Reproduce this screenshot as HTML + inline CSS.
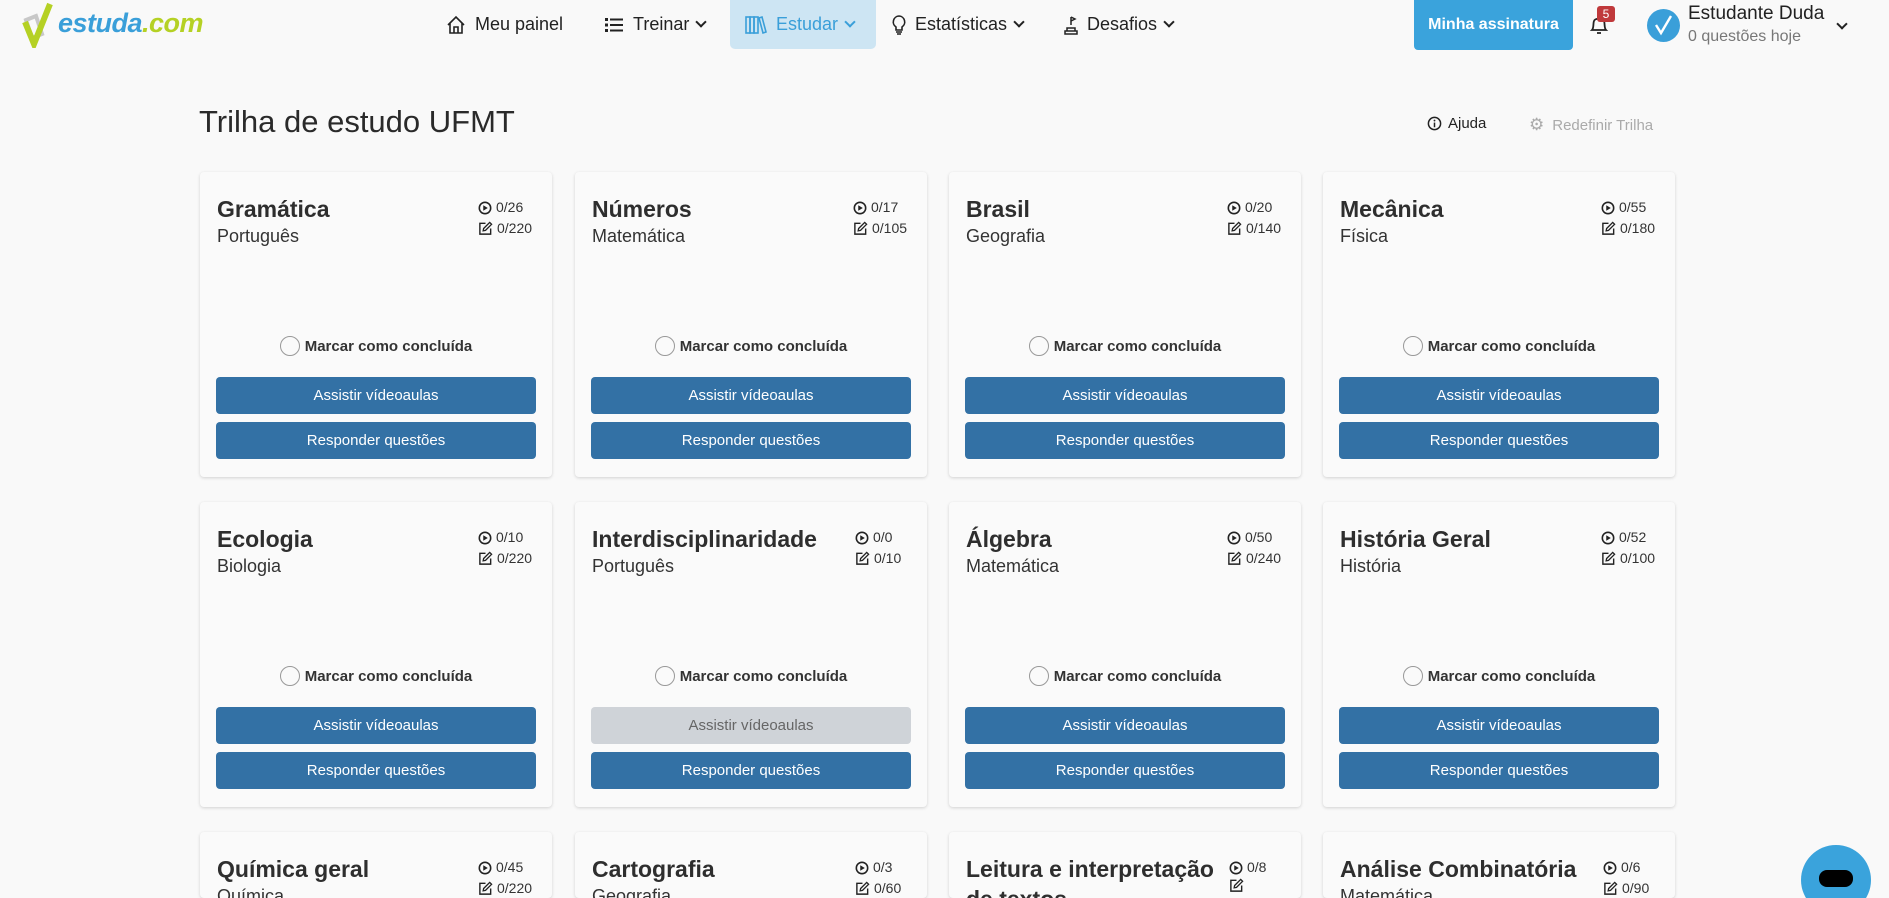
<!DOCTYPE html>
<html><head><meta charset="utf-8">
<style>
*{box-sizing:border-box;margin:0;padding:0}
html,body{width:1889px;height:898px;overflow:hidden}
body{background:#f9f9f9;font-family:"Liberation Sans",sans-serif;color:#2b2b2b;position:relative}
.abs{position:absolute}
.nav{font-size:18px;color:#222;display:flex;align-items:center;height:49px;top:0}
.nav svg{margin-right:9px}
.chev{display:inline-block;margin-left:8px;width:8px;height:8px;border-right:2.5px solid currentColor;border-bottom:2.5px solid currentColor;transform:rotate(45deg);margin-top:-5px}
.card{position:absolute;width:352px;height:305px;background:#fafafa;border-radius:4px;box-shadow:0 1px 3px rgba(0,0,0,.16)}
.card .t{position:absolute;left:17px;top:22px;font-size:23px;font-weight:bold;color:#2e2e2e;width:250px;line-height:30px}
.card .s{position:absolute;left:17px;top:54px;font-size:18px;color:#333}
.card .st{position:absolute;left:278px;top:25px;font-size:14px;line-height:21px;color:#333}
.card .st div{display:flex;align-items:center;gap:4px;white-space:nowrap}
.card .mk{position:absolute;left:0;right:0;top:164px;text-align:center;font-size:15px;font-weight:bold;color:#333;display:flex;justify-content:center;align-items:center;gap:5px}
.mk i{display:inline-block;width:20px;height:20px;border:1.5px solid #999;border-radius:50%}
.btn{position:absolute;left:16px;width:320px;height:37px;background:#3371a5;color:#fff;border-radius:4px;font-size:15px;display:flex;align-items:center;justify-content:center}
.b1{top:205px}.b2{top:250px}
.dis{background:#cfd3d8;color:#666}
.short{height:66px}
</style></head><body>

<svg width="0" height="0" style="position:absolute">
<defs>
<symbol id="pl" viewBox="0 0 16 16"><circle cx="8" cy="8" r="6.5" fill="none" stroke="#222" stroke-width="1.8"/><path d="M6 4.8 L11.2 8 L6 11.2 Z" fill="#222"/></symbol>
<symbol id="ed" viewBox="0 0 16 16"><path d="M8 2.5 H2 V14 H13.5 V8" fill="none" stroke="#222" stroke-width="1.5"/><path d="M12.5 1.5 L14.5 3.5 L8 10 L5.5 10.5 L6 8 Z" fill="none" stroke="#222" stroke-width="1.4"/></symbol>
</defs></svg>

<!-- logo -->
<svg class="abs" style="left:22px;top:2px" width="40" height="46" viewBox="0 0 40 46">
<path d="M4 18 L14 14 L20 32 L10 36 Z" fill="none" stroke="#c8c8c8" stroke-width="4"/>
<path d="M3 20 L12 42 L28 2" fill="none" stroke="#b5d124" stroke-width="6"/>
</svg>
<div class="abs" style="left:58px;top:8px;font-size:27px;font-weight:bold;font-style:italic;letter-spacing:-0.5px"><span style="color:#3a9fd9">estuda</span><span style="color:#b5d124">.com</span></div>

<div class="abs nav" style="left:446px"><svg width="20" height="20" viewBox="0 0 20 20" fill="none" stroke="#222" stroke-width="1.6"><path d="M2 10 L10 2 L18 10 M4 8 V18 H16 V8 M8 18 V12 H12 V18"/></svg>Meu painel</div>
<div class="abs nav" style="left:604px"><svg width="20" height="20" viewBox="0 0 20 20" fill="#222"><rect x="1" y="3" width="3" height="3"/><rect x="6" y="3.5" width="13" height="2"/><rect x="1" y="8.5" width="3" height="3"/><rect x="6" y="9" width="13" height="2"/><rect x="1" y="14" width="3" height="3"/><rect x="6" y="14.5" width="13" height="2"/></svg>Treinar<span class="chev"></span></div>
<div class="abs" style="left:730px;top:0;width:146px;height:49px;background:#cde5f3;border-radius:0 0 5px 5px"></div>
<div class="abs nav" style="left:745px;color:#3a9fd9"><svg width="22" height="20" viewBox="0 0 22 20" fill="none" stroke="#3a9fd9" stroke-width="1.6"><rect x="1" y="2" width="4" height="16"/><rect x="5" y="2" width="4" height="16"/><rect x="9" y="2" width="4" height="16"/><path d="M14 3 L17 2 L21 17 L18 18 Z"/></svg>Estudar<span class="chev"></span></div>
<div class="abs nav" style="left:892px"><svg width="14" height="20" viewBox="0 0 14 20" fill="none" stroke="#222" stroke-width="1.6"><path d="M7 1 A6 6 0 0 1 10 12 V15 H4 V12 A6 6 0 0 1 7 1 Z M4 17 H10 M5 19 H9"/></svg>Estatísticas<span class="chev"></span></div>
<div class="abs nav" style="left:1064px"><svg width="14" height="20" viewBox="0 0 14 20" fill="none" stroke="#222" stroke-width="1.5"><path d="M7 2 V10 M7 2 L11 4 L7 6"/><path d="M3 13 H11 V16 H3 Z M1 16 H13 V19 H1 Z"/></svg>Desafios<span class="chev"></span></div>

<div class="abs" style="left:1414px;top:0;width:159px;height:50px;background:#3aa3dc;border-radius:0 0 4px 4px;color:#fff;font-weight:bold;font-size:16px;display:flex;align-items:center;justify-content:center">Minha assinatura</div>
<svg class="abs" style="left:1589px;top:14px" width="20" height="22" viewBox="0 0 20 22" fill="none" stroke="#222" stroke-width="1.8"><path d="M3 16 C5 14 4 9 5 7 C6 4 14 4 15 7 C16 9 15 14 17 16 Z M8 19 H12"/></svg>
<div class="abs" style="left:1597px;top:6px;width:18px;height:16px;background:#c0393b;border-radius:3px;color:#fff;font-size:12px;text-align:center;line-height:16px">5</div>
<div class="abs" style="left:1647px;top:9px;width:33px;height:33px;border-radius:50%;background:#3a9fd9"></div>
<svg class="abs" style="left:1653px;top:13px" width="22" height="24" viewBox="0 0 22 24" fill="none" stroke="#fff" stroke-width="2.4"><path d="M3 12 L8 20 L18 3"/></svg>
<div class="abs" style="left:1688px;top:3px;font-size:19px;color:#222">Estudante Duda</div>
<div class="abs" style="left:1688px;top:28px;font-size:16px;color:#777">0 questões hoje</div>
<span class="abs chev" style="left:1838px;top:20px;color:#222;margin:0"></span>

<div class="abs" style="left:199px;top:104px;font-size:31px;color:#2a2a2a">Trilha de estudo UFMT</div>
<div class="abs" style="left:1427px;top:115px;font-size:15px;color:#222;display:flex;align-items:center;gap:6px"><svg width="15" height="15" viewBox="0 0 16 16"><circle cx="8" cy="8" r="6.5" fill="none" stroke="#222" stroke-width="1.6"/><rect x="7.2" y="7" width="1.6" height="5" fill="#222"/><circle cx="8" cy="4.8" r="1" fill="#222"/></svg>Ajuda</div>
<div class="abs" style="left:1529px;top:115px;font-size:15px;color:#aaa;display:flex;align-items:center;gap:8px"><span style="font-size:17px;color:#aaa">&#9881;</span>Redefinir Trilha</div>

<div class="card" style="left:200px;top:172px"><div class="t">Gramática</div><div class="s">Português</div><div class="st"><div><svg width="14" height="14"><use href="#pl"/></svg>0/26</div><div><svg width="15" height="15"><use href="#ed"/></svg>0/220</div></div><div class="mk"><i></i>Marcar como concluída</div><div class="btn b1">Assistir vídeoaulas</div><div class="btn b2">Responder questões</div></div>
<div class="card" style="left:575px;top:172px"><div class="t">Números</div><div class="s">Matemática</div><div class="st"><div><svg width="14" height="14"><use href="#pl"/></svg>0/17</div><div><svg width="15" height="15"><use href="#ed"/></svg>0/105</div></div><div class="mk"><i></i>Marcar como concluída</div><div class="btn b1">Assistir vídeoaulas</div><div class="btn b2">Responder questões</div></div>
<div class="card" style="left:949px;top:172px"><div class="t">Brasil</div><div class="s">Geografia</div><div class="st"><div><svg width="14" height="14"><use href="#pl"/></svg>0/20</div><div><svg width="15" height="15"><use href="#ed"/></svg>0/140</div></div><div class="mk"><i></i>Marcar como concluída</div><div class="btn b1">Assistir vídeoaulas</div><div class="btn b2">Responder questões</div></div>
<div class="card" style="left:1323px;top:172px"><div class="t">Mecânica</div><div class="s">Física</div><div class="st"><div><svg width="14" height="14"><use href="#pl"/></svg>0/55</div><div><svg width="15" height="15"><use href="#ed"/></svg>0/180</div></div><div class="mk"><i></i>Marcar como concluída</div><div class="btn b1">Assistir vídeoaulas</div><div class="btn b2">Responder questões</div></div>

<div class="card" style="left:200px;top:502px"><div class="t">Ecologia</div><div class="s">Biologia</div><div class="st"><div><svg width="14" height="14"><use href="#pl"/></svg>0/10</div><div><svg width="15" height="15"><use href="#ed"/></svg>0/220</div></div><div class="mk"><i></i>Marcar como concluída</div><div class="btn b1">Assistir vídeoaulas</div><div class="btn b2">Responder questões</div></div>
<div class="card" style="left:575px;top:502px"><div class="t">Interdisciplinaridade</div><div class="s">Português</div><div class="st" style="left:280px"><div><svg width="14" height="14"><use href="#pl"/></svg>0/0</div><div><svg width="15" height="15"><use href="#ed"/></svg>0/10</div></div><div class="mk"><i></i>Marcar como concluída</div><div class="btn b1 dis">Assistir vídeoaulas</div><div class="btn b2">Responder questões</div></div>
<div class="card" style="left:949px;top:502px"><div class="t">Álgebra</div><div class="s">Matemática</div><div class="st"><div><svg width="14" height="14"><use href="#pl"/></svg>0/50</div><div><svg width="15" height="15"><use href="#ed"/></svg>0/240</div></div><div class="mk"><i></i>Marcar como concluída</div><div class="btn b1">Assistir vídeoaulas</div><div class="btn b2">Responder questões</div></div>
<div class="card" style="left:1323px;top:502px"><div class="t">História Geral</div><div class="s">História</div><div class="st"><div><svg width="14" height="14"><use href="#pl"/></svg>0/52</div><div><svg width="15" height="15"><use href="#ed"/></svg>0/100</div></div><div class="mk"><i></i>Marcar como concluída</div><div class="btn b1">Assistir vídeoaulas</div><div class="btn b2">Responder questões</div></div>

<div class="card short" style="left:200px;top:832px"><div class="t">Química geral</div><div class="s">Química</div><div class="st"><div><svg width="14" height="14"><use href="#pl"/></svg>0/45</div><div><svg width="15" height="15"><use href="#ed"/></svg>0/220</div></div></div>
<div class="card short" style="left:575px;top:832px"><div class="t">Cartografia</div><div class="s">Geografia</div><div class="st" style="left:280px"><div><svg width="14" height="14"><use href="#pl"/></svg>0/3</div><div><svg width="15" height="15"><use href="#ed"/></svg>0/60</div></div></div>
<div class="card short" style="left:949px;top:832px"><div class="t">Leitura e interpretação de textos</div><div class="st" style="left:280px"><div><svg width="14" height="14"><use href="#pl"/></svg>0/8</div><div><svg width="15" height="15"><use href="#ed"/></svg></div></div></div>
<div class="card short" style="left:1323px;top:832px"><div class="t">Análise Combinatória</div><div class="s">Matemática</div><div class="st" style="left:280px"><div><svg width="14" height="14"><use href="#pl"/></svg>0/6</div><div><svg width="15" height="15"><use href="#ed"/></svg>0/90</div></div></div>

<div class="abs" style="left:1801px;top:845px;width:70px;height:70px;border-radius:50%;background:#3aa3dc"></div>
<div class="abs" style="left:1819px;top:870px;width:34px;height:17px;border-radius:8px;background:#000"></div>
</body></html>
